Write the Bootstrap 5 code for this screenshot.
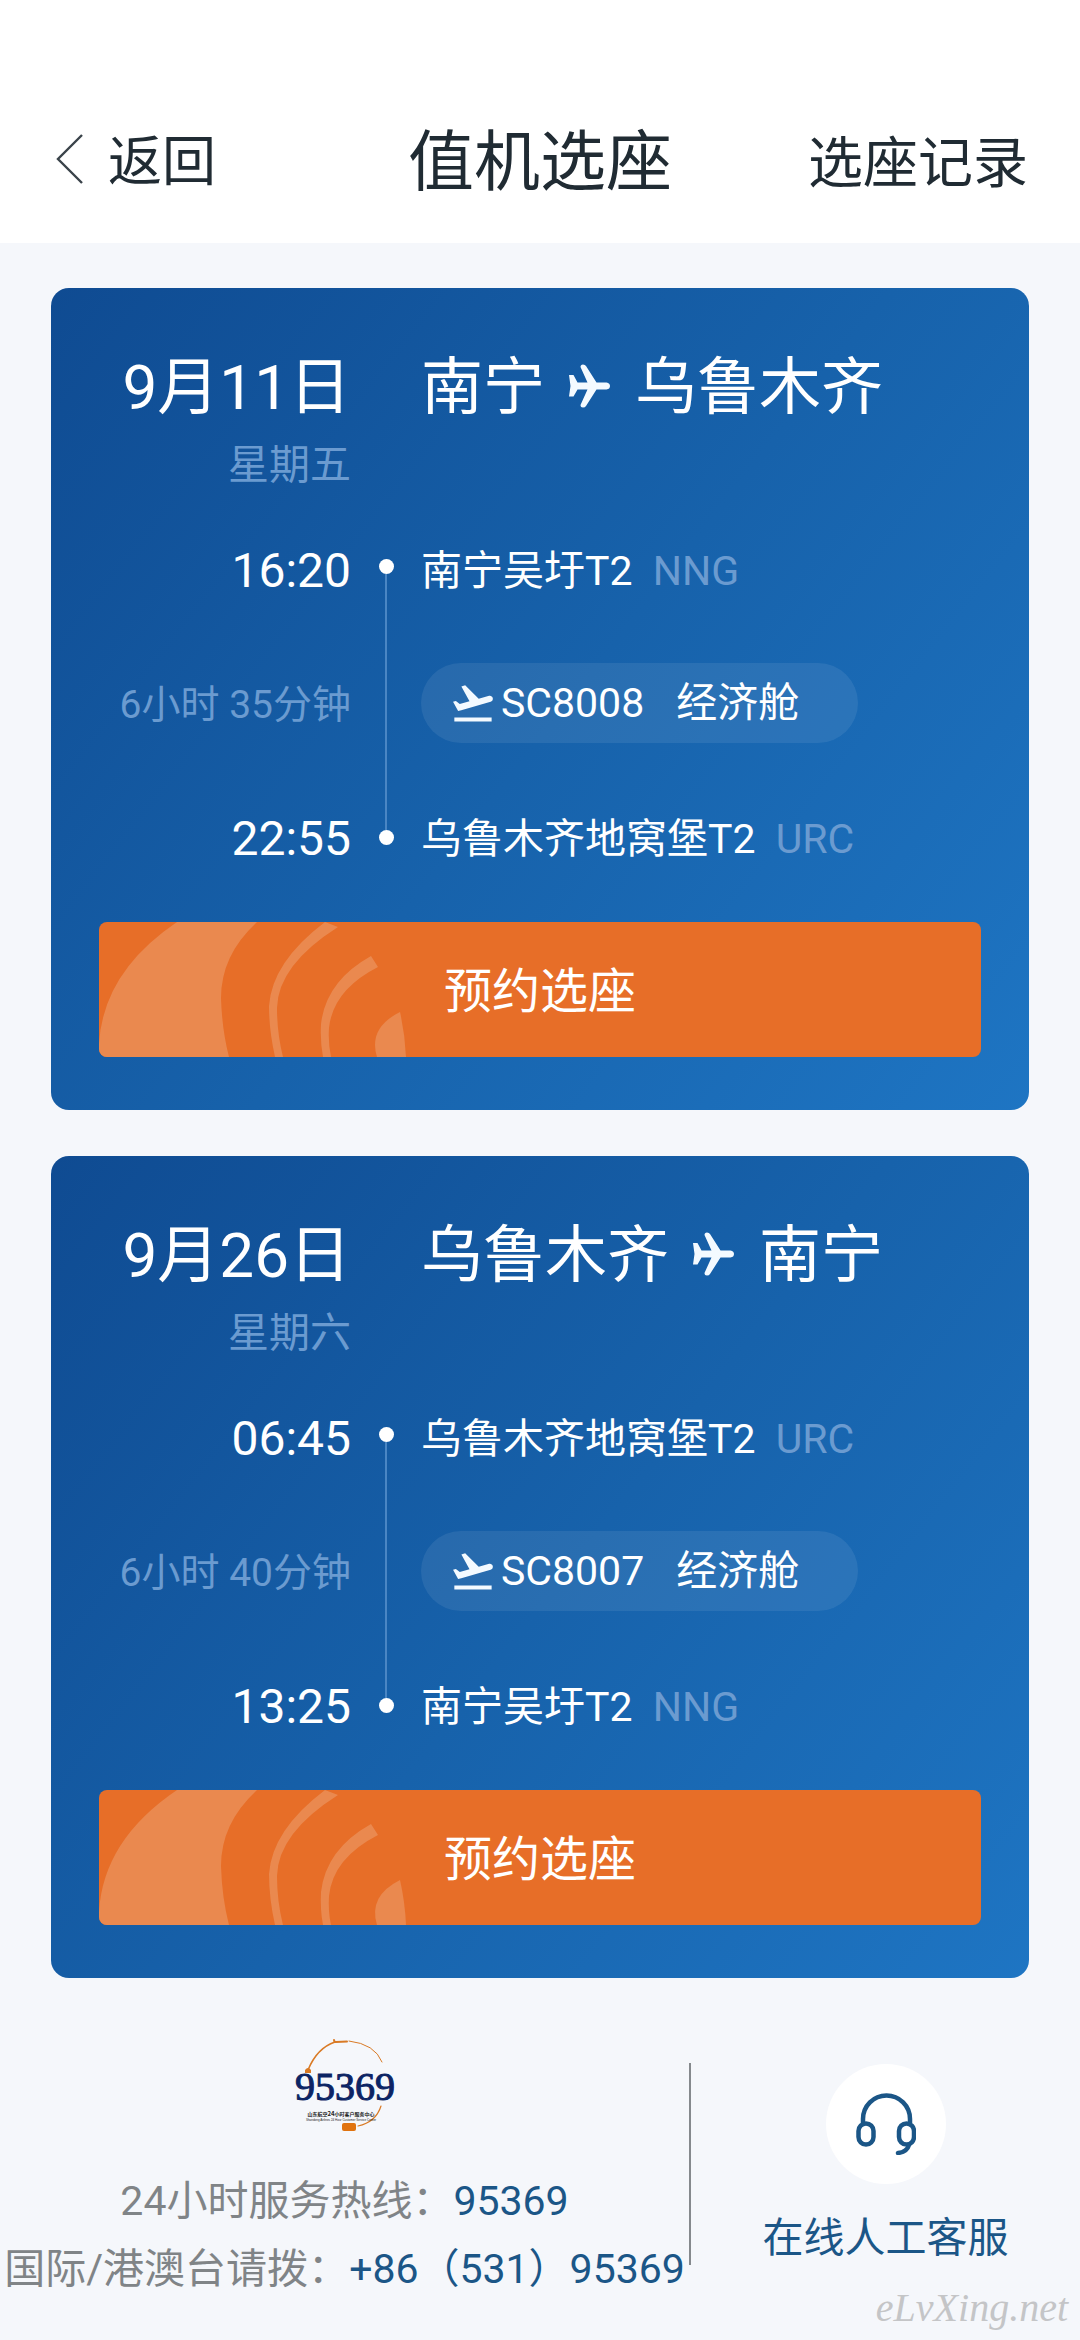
<!DOCTYPE html>
<html lang="zh-CN">
<head>
<meta charset="utf-8">
<meta name="viewport" content="width=device-width, initial-scale=1">
<title>值机选座</title>
<link rel="stylesheet" href="https://cdn.jsdelivr.net/npm/bootstrap@5.3.0/dist/css/bootstrap.min.css">
<style>
  body { background: #f5f7fb; color: #202b33; font-family: Roboto, "Noto Sans CJK SC", sans-serif; font-size: 41px; line-height: 62px; }
  a { text-decoration: none; }
  .topbar { background: #fff; padding: 118px 52px 35px; }
  .topbar a { color: inherit; font-size: 55px; line-height: 90px; }
  .topbar h1 { font-size: 66px; line-height: 90px; font-weight: 400; }
  .topbar .back-link { font-size: 54px; }
  .back-icon { width: 34px; height: 52px; margin-right: 22px; margin-bottom: 6px; }
  .trips { padding: 45px 51px 0; gap: 46px; }
  .trip { background: linear-gradient(128deg, #0f4b92 0%, #1762ab 52%, #1e75c3 100%); border-radius: 18px; padding: 54px 48px 53px; color: #fff; }
  .trip-grid { display: grid; grid-template-columns: 252px 70px 1fr; grid-template-rows: 92px 70px repeat(3, 134px); align-items: center; }
  .trip-date, .trip-route { font-size: 62px; line-height: 92px; font-weight: 400; }
  .trip-week { align-self: start; }
  .trip-time { font-size: 48px; }
  .duration { font-size: 39px; }
  .faded { color: #6b9bd0; }
  .code { margin-left: 10px; }
  .plane { width: 42px; height: 44px; margin: 0 24px 4px; }
  .rail { grid-column: 2; grid-row: 3 / 6; padding: 55px 0 61px; height: 100%; }
  .stop-dot { width: 15px; height: 15px; background: #fff; }
  .rail-line { width: 2px; background: #4a86c4; }
  .flight-pill { height: 80px; margin-bottom: 4px; padding: 0 59px 0 30px; background: rgba(255, 255, 255, .08); }
  .takeoff { width: 42px; height: 37px; margin-right: 8px; }
  .cabin { margin-left: 32px; }
  .book-btn { --bs-btn-bg: #e76e28; --bs-btn-border-width: 0; --bs-btn-color: #fff; --bs-btn-hover-bg: #d9621d; --bs-btn-hover-color: #fff; height: 135px; margin-top: 16px; padding: 10px 12px 6px; border-radius: 8px; font-size: 48px; }
  .book-art { width: 310px; height: 135px; }
  .support { padding-top: 61px; }
  .hotline { width: 63.8%; color: #808487; line-height: 68px; }
  .hotline a, .online { color: #1b5687; }
  .hotline-logo { width: 100px; height: 92px; margin-bottom: 36px; }
  .divider { width: 2px; height: 202px; margin-top: 24px; background: #85898d; }
  .online { margin-top: 25px; line-height: 68px; }
  .online-icon { width: 120px; height: 120px; margin-bottom: 20px; background: #fff; }
  .signature { right: 12px; bottom: 8px; color: #c4c5c7; font: italic 40px/48px "Liberation Serif", serif; }
</style>
</head>
<body class="position-relative min-vh-100">
<header class="topbar d-flex align-items-center">
  <div class="col d-flex">
    <a href="#" class="back-link d-flex align-items-center">
      <svg class="back-icon" viewBox="0 0 34 52" fill="none" stroke="#3a434a" stroke-width="2.4" aria-hidden="true"><path d="M30 1 6 25 30 49"/></svg>返回</a>
  </div>
  <h1 class="mb-0 text-nowrap">值机选座</h1>
  <nav class="col text-end text-nowrap"><a href="#">选座记录</a></nav>
</header>

<svg class="d-none" aria-hidden="true">
  <symbol id="plane" viewBox="28 11 42 44"><path fill="#f4faff" d="M28 22h4.500l4 7.500h10L39.500 14Q39.500 11.500 42 11.500Q44 11.500 45 13L55.500 29.500H65.500Q69 30 69 33Q69 36 65.500 36.500H55.500L45 53Q44 54.500 42 54.500Q39.500 54.500 39.500 52L46.500 36.500H36.500L32.500 43.500H28L29.500 33z"/></symbol>
  <symbol id="takeoff" viewBox="0.800 3.400 21.400 17.800" preserveAspectRatio="none"><path fill="#f4faff" d="M2.500 19h19v2h-19zm19.570-9.360c-.21-.8-1.040-1.280-1.840-1.060L14.920 10l-6.900-6.430-1.930.51 4.140 7.170-4.970 1.330-1.970-1.540-1.450.39 1.820 3.160.77 1.330 1.600-.43 5.310-1.420 4.350-1.160L21 11.490c.81-.23 1.280-1.050 1.070-1.850z"/></symbol>
  <symbol id="waves" viewBox="0 0 310 135"><g fill="#ea894f">
    <path d="M0 135V122Q4 50 78 0H158Q122 33 122 76Q123 108 130 135z"/>
    <path d="M226 0 239 5Q179 43 178 86Q178 111 184 135H176Q170 108 170 84Q173 40 226 0z"/>
    <path d="M272 34 279 45Q234 68 230 106Q229 121 232 135H224Q221 119 222 102Q227 59 272 34z"/>
    <path d="M301 90Q306 112 307 135H278Q269 106 301 90z"/></g></symbol>
</svg>

<main class="trips d-flex flex-column">
  <article class="trip">
    <div class="trip-grid text-nowrap">
      <div class="trip-date text-end">9月11日</div><div></div>
      <h2 class="trip-route d-flex align-items-center mb-0">南宁<svg class="plane"><use href="#plane"/></svg>乌鲁木齐</h2>
      <div class="trip-week faded text-end">星期五</div><div></div><div></div>
      <div class="rail d-flex flex-column align-items-center"><span class="stop-dot rounded-circle"></span><span class="rail-line flex-grow-1"></span><span class="stop-dot rounded-circle"></span></div>
      <div class="trip-time text-end">16:20</div>
      <div>南宁吴圩T2 <span class="code faded">NNG</span></div>
      <div class="duration faded text-end">6小时 35分钟</div>
      <div class="d-flex"><div class="flight-pill d-flex align-items-center rounded-pill"><svg class="takeoff"><use href="#takeoff"/></svg>SC8008<span class="cabin">经济舱</span></div></div>
      <div class="trip-time text-end">22:55</div>
      <div>乌鲁木齐地窝堡T2 <span class="code faded">URC</span></div>
    </div>
    <button type="button" class="book-btn btn w-100 position-relative overflow-hidden"><svg class="book-art position-absolute top-0 start-0"><use href="#waves"/></svg><span class="position-relative">预约选座</span></button>
  </article>

  <article class="trip">
    <div class="trip-grid text-nowrap">
      <div class="trip-date text-end">9月26日</div><div></div>
      <h2 class="trip-route d-flex align-items-center mb-0">乌鲁木齐<svg class="plane"><use href="#plane"/></svg>南宁</h2>
      <div class="trip-week faded text-end">星期六</div><div></div><div></div>
      <div class="rail d-flex flex-column align-items-center"><span class="stop-dot rounded-circle"></span><span class="rail-line flex-grow-1"></span><span class="stop-dot rounded-circle"></span></div>
      <div class="trip-time text-end">06:45</div>
      <div>乌鲁木齐地窝堡T2 <span class="code faded">URC</span></div>
      <div class="duration faded text-end">6小时 40分钟</div>
      <div class="d-flex"><div class="flight-pill d-flex align-items-center rounded-pill"><svg class="takeoff"><use href="#takeoff"/></svg>SC8007<span class="cabin">经济舱</span></div></div>
      <div class="trip-time text-end">13:25</div>
      <div>南宁吴圩T2 <span class="code faded">NNG</span></div>
    </div>
    <button type="button" class="book-btn btn w-100 position-relative overflow-hidden"><svg class="book-art position-absolute top-0 start-0"><use href="#waves"/></svg><span class="position-relative">预约选座</span></button>
  </article>
</main>

<footer class="support d-flex text-nowrap">
  <div class="hotline d-flex flex-column align-items-center">
    <svg class="hotline-logo" viewBox="0 0 100 92" role="img" aria-label="95369">
      <g fill="none" stroke="#d97a25" stroke-linecap="round"><path stroke-width="1.600" d="M13 31Q22 9 40 3"/><path stroke-width="2" d="M40 3q-1-1-1-2M41 3l11-.5"/><path stroke-width="1" d="M54 2Q80 5 87 23"/><path stroke-width="1.200" d="M86 67Q81 83 63 87"/></g>
      <path fill="#d97a25" d="M10 31q3-4 6 0v3h-6z"/><rect x="47" y="84" width="14" height="8" rx="2" fill="#e0730f"/>
      <text x="50" y="61" text-anchor="middle" font-family="Liberation Serif, serif" font-size="40" fill="#0c2464" stroke="#0c2464" stroke-width="1">95369</text>
      <text x="46" y="77" text-anchor="middle" font-family="Noto Sans CJK SC, sans-serif" font-weight="700" font-size="5" fill="#222">山东航空<tspan font-size="6">24</tspan>小时客户服务中心</text>
      <text x="46" y="82" text-anchor="middle" font-family="Liberation Sans, sans-serif" font-size="3" fill="#222">Shandong Airlines 24 Hour Customer Service Center</text>
    </svg>
    <div>24小时服务热线：<a href="tel:95369">95369</a></div>
    <div>国际/港澳台请拨：<a href="tel:+8653195369">+86（531）95369</a></div>
  </div>
  <div class="divider flex-shrink-0"></div>
  <a href="#" class="online col d-flex flex-column align-items-center">
    <span class="online-icon rounded-circle d-flex align-items-center justify-content-center">
      <svg width="60" height="62" viewBox="0 0 60 62" fill="none" stroke="#1b5687" stroke-width="4.500" stroke-linecap="round" aria-hidden="true"><path d="M7 30V26a23.500 23.500 0 0 1 47 0v4"/><rect x="2.500" y="30.500" width="15" height="21" rx="7.500"/><rect x="43" y="30.500" width="15" height="21" rx="7.500"/><path d="M53 52q-2 7-11 8"/></svg>
    </span>
    在线人工客服
  </a>
</footer>
<div class="signature position-absolute">eLvXing.net</div>
<script src="https://cdn.jsdelivr.net/npm/bootstrap@5.3.0/dist/js/bootstrap.bundle.min.js"></script>
</body>
</html>
